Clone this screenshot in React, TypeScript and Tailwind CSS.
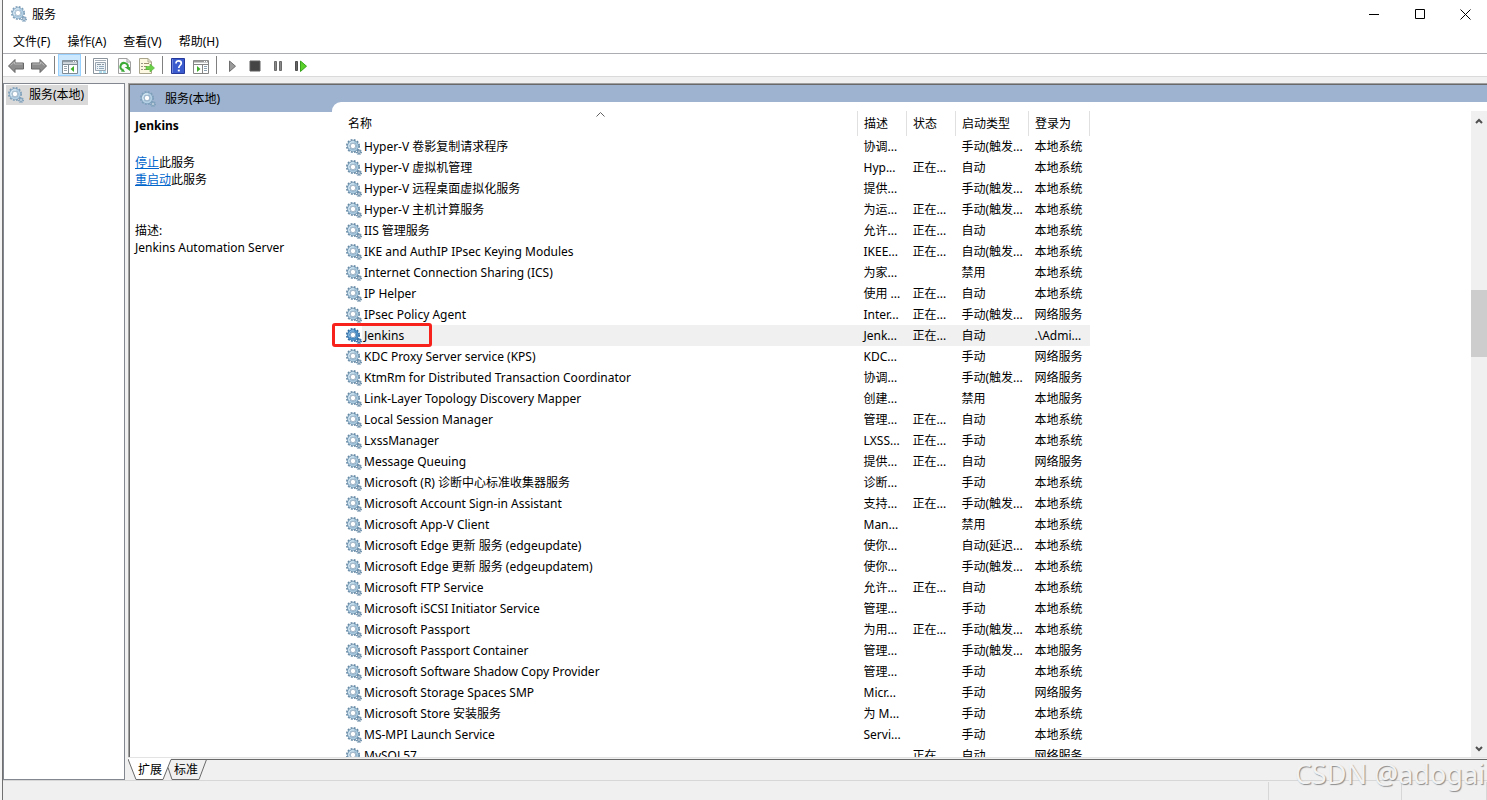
import { useState } from "react";
import type { ReactNode } from "react";

type Service = {
  name: string;
  desc: string;
  status: string;
  startup: string;
  logon: string;
};

const RUNNING = "正在...";
const MANUAL_TRIGGER = "手动(触发...";
const LOCAL_SYSTEM = "本地系统";
const LOCAL_SERVICE = "本地服务";
const NETWORK_SERVICE = "网络服务";

function row(
  name: string,
  desc: string,
  status: string,
  startup: string,
  logon: string,
): Service {
  return { name, desc, status, startup, logon };
}

const services: Service[] = [
  row("Hyper-V 卷影复制请求程序", "协调...", "", MANUAL_TRIGGER, LOCAL_SYSTEM),
  row("Hyper-V 虚拟机管理", "Hyp...", RUNNING, "自动", LOCAL_SYSTEM),
  row("Hyper-V 远程桌面虚拟化服务", "提供...", "", MANUAL_TRIGGER, LOCAL_SYSTEM),
  row("Hyper-V 主机计算服务", "为运...", RUNNING, MANUAL_TRIGGER, LOCAL_SYSTEM),
  row("IIS 管理服务", "允许...", RUNNING, "自动", LOCAL_SYSTEM),
  row("IKE and AuthIP IPsec Keying Modules", "IKEE...", RUNNING, "自动(触发...", LOCAL_SYSTEM),
  row("Internet Connection Sharing (ICS)", "为家...", "", "禁用", LOCAL_SYSTEM),
  row("IP Helper", "使用 ...", RUNNING, "自动", LOCAL_SYSTEM),
  row("IPsec Policy Agent", "Inter...", RUNNING, MANUAL_TRIGGER, NETWORK_SERVICE),
  row("Jenkins", "Jenk...", RUNNING, "自动", ".\\Admi..."),
  row("KDC Proxy Server service (KPS)", "KDC...", "", "手动", NETWORK_SERVICE),
  row("KtmRm for Distributed Transaction Coordinator", "协调...", "", MANUAL_TRIGGER, NETWORK_SERVICE),
  row("Link-Layer Topology Discovery Mapper", "创建...", "", "禁用", LOCAL_SERVICE),
  row("Local Session Manager", "管理...", RUNNING, "自动", LOCAL_SYSTEM),
  row("LxssManager", "LXSS...", RUNNING, "手动", LOCAL_SYSTEM),
  row("Message Queuing", "提供...", RUNNING, "自动", NETWORK_SERVICE),
  row("Microsoft (R) 诊断中心标准收集器服务", "诊断...", "", "手动", LOCAL_SYSTEM),
  row("Microsoft Account Sign-in Assistant", "支持...", RUNNING, MANUAL_TRIGGER, LOCAL_SYSTEM),
  row("Microsoft App-V Client", "Man...", "", "禁用", LOCAL_SYSTEM),
  row("Microsoft Edge 更新 服务 (edgeupdate)", "使你...", "", "自动(延迟...", LOCAL_SYSTEM),
  row("Microsoft Edge 更新 服务 (edgeupdatem)", "使你...", "", MANUAL_TRIGGER, LOCAL_SYSTEM),
  row("Microsoft FTP Service", "允许...", RUNNING, "自动", LOCAL_SYSTEM),
  row("Microsoft iSCSI Initiator Service", "管理...", "", "手动", LOCAL_SYSTEM),
  row("Microsoft Passport", "为用...", RUNNING, MANUAL_TRIGGER, LOCAL_SYSTEM),
  row("Microsoft Passport Container", "管理...", "", MANUAL_TRIGGER, LOCAL_SERVICE),
  row("Microsoft Software Shadow Copy Provider", "管理...", "", "手动", LOCAL_SYSTEM),
  row("Microsoft Storage Spaces SMP", "Micr...", "", "手动", NETWORK_SERVICE),
  row("Microsoft Store 安装服务", "为 M...", "", "手动", LOCAL_SYSTEM),
  row("MS-MPI Launch Service", "Servi...", "", "手动", LOCAL_SYSTEM),
  row("MySQL57", "", RUNNING, "自动", NETWORK_SERVICE),
];

export default function App() {
  const [selected, setSelected] = useState("Jenkins");

  return (
    <div className="flex h-screen w-full overflow-hidden bg-[#f0f0f0] font-['Noto_Sans','Noto_Sans_CJK_SC',sans-serif] text-xs text-black">
      <div className="w-[3px] shrink-0 border-r border-[#707070] bg-[#f4f4f4]" />
      <div className="flex min-w-0 flex-1 flex-col">
        <TitleBar />
        <MenuBar />
        <Toolbar />
        <main className="flex min-h-0 flex-1 gap-[3px] pt-[6px]">
          <aside className="w-[122px] shrink-0 border border-[#828790] bg-white">
            <button className="ml-[2px] mt-px flex h-5 items-center gap-[5px] bg-[#d9d9d9] px-[2px] pr-1">
              <GearIcon />
              服务(本地)
            </button>
          </aside>
          <div className="flex min-w-0 flex-1 flex-col">
            <div className="flex min-h-0 flex-1 border-l border-t border-[#a0a0a0]">
              <div className="flex min-w-0 flex-1 border-l border-t border-[#696969] bg-white">
                <InfoPanel name={selected} />
                <section className="flex min-w-0 flex-1 flex-col bg-[#9db3cf] pt-[17px]">
                  <div className="flex min-h-0 flex-1 rounded-tl-[9px] bg-white pt-[9px]">
                    <div className="min-w-0 flex-1 overflow-hidden">
                      <ServiceTable selected={selected} onSelect={setSelected} />
                    </div>
                    <ScrollBar />
                  </div>
                </section>
              </div>
            </div>
            <ViewTabs />
          </div>
        </main>
        <footer className="flex h-5 shrink-0 justify-end border-t border-[#d7d7d7] pt-px">
          <div className="w-[133px] border-l border-[#d7d7d7]" />
          <div className="w-[86px] border-x border-[#d7d7d7]" />
        </footer>
      </div>
      <span className="pointer-events-none absolute bottom-2 right-[2px] text-[27px] leading-9 text-[#f2f2f2] [text-shadow:1px_1px_1px_#8c8c8c]">
        CSDN @adogai
      </span>
    </div>
  );
}

function TitleBar() {
  return (
    <header className="flex h-7 shrink-0 items-center bg-white pl-2">
      <GearIcon />
      <h1 className="ml-[5px] flex-1 pt-[2px]">服务</h1>
      <button aria-label="最小化" className="flex h-full w-[46px] items-center justify-center">
        <svg width="10" height="10" stroke="#000">
          <path d="M0 5.5H10" />
        </svg>
      </button>
      <button aria-label="最大化" className="flex h-full w-[46px] items-center justify-center">
        <svg width="10" height="10" fill="none" stroke="#000">
          <path d="M.5 .5H9.5V9.5H.5Z" />
        </svg>
      </button>
      <button aria-label="关闭" className="flex h-full w-[44px] items-center justify-center">
        <svg width="11" height="11" stroke="#000">
          <path d="M.5 .5L10.5 10.5M10.5 .5L.5 10.5" />
        </svg>
      </button>
    </header>
  );
}

function MenuBar() {
  return (
    <nav className="flex h-[26px] shrink-0 items-center gap-[17px] border-b border-[#abadb3] bg-white pl-[10px] pt-[2px]">
      {["文件(F)", "操作(A)", "查看(V)", "帮助(H)"].map((item) => (
        <button key={item}>{item}</button>
      ))}
    </nav>
  );
}

function ToolButton({
  label,
  active,
  children,
}: {
  label: string;
  active?: boolean;
  children: ReactNode;
}) {
  return (
    <button
      aria-label={label}
      className={`${active ? "border border-[#99d1ff] bg-[#cce8ff]" : ""} flex h-[22px] w-[23px] items-center justify-center`}
    >
      <svg width="16" height="16" viewBox="0 0 16 16" fill="none" className="mt-px">
        {children}
      </svg>
    </button>
  );
}

function Divider() {
  return <div className="ml-1 mr-[3px] h-[18px] w-px bg-[#808080]" />;
}

function Toolbar() {
  return (
    <div className="flex h-[23px] shrink-0 items-center border-b border-[#dadada] bg-white pl-px">
      <ToolButton label="后退">
        <path
          d="M.5 8L7 1.5V5H15.5V11H7V14.5Z"
          fill="#8d8d8d"
          stroke="#666"
          strokeLinejoin="round"
        />
        <path d="M2.5 7.5L6.5 4V6H14.5" stroke="#b9b9b9" />
      </ToolButton>
      <ToolButton label="前进">
        <path
          d="M15.5 8L9 1.5V5H.5V11H9V14.5Z"
          fill="#8d8d8d"
          stroke="#666"
          strokeLinejoin="round"
        />
        <path d="M1.5 6H9.5V4L13.5 7.5" stroke="#b9b9b9" />
      </ToolButton>
      <Divider />
      <ToolButton label="显示/隐藏控制台树" active>
        <path d="M.5 2.5H15.5V15.5H.5Z" fill="#fff" stroke="#7f8b95" />
        <path d="M1 3.5H15" stroke="#8f9ba5" strokeWidth="2" />
        <path d="M11 3.5H14" stroke="#fff" strokeDasharray="1 1" />
        <path d="M1 5.5H15" stroke="#d3dae0" />
        <path d="M1 6.5H15M6.5 7V15" stroke="#7f8b95" />
        <path d="M2 8.5H5M2 10.5H5M2 12.5H5" stroke="#9aa5ae" />
        <path d="M12 8V14L8.5 11Z" fill="#3faf2c" />
      </ToolButton>
      <Divider />
      <ToolButton label="属性">
        <path d="M.5 .5H14.5V15.5H.5Z" fill="#fff" stroke="#8b949c" />
        <path d="M2 2.5H13" stroke="#a5b0b9" />
        <path d="M2.5 4.5H12.5V12.5H2.5Z" fill="#eef3f7" stroke="#9aa7b2" />
        <path d="M4 6.5H8M9 6.5H11" stroke="#8997a3" />
        <path d="M4 8.5H5M6 8.5H11M4 10.5H5M6 10.5H11" stroke="#8fa8bc" />
        <path d="M6 14H9M10 14H13" stroke="#63bfe0" />
      </ToolButton>
      <ToolButton label="刷新">
        <path d="M2.5 .5H11L14.5 4V15.5H2.5Z" fill="#fbfbfb" stroke="#a0a0a0" />
        <path d="M11 .5V4H14.5" stroke="#a0a0a0" />
        <path d="M6.6 12A3.7 3.7 0 1 1 11.8 9.4" stroke="#3aa935" strokeWidth="2" />
        <path d="M8.5 9H14V13Z" fill="#3aa935" />
        <path d="M5 13.5L9 14L7 10.5Z" fill="#3aa935" />
      </ToolButton>
      <ToolButton label="导出列表">
        <path d="M.5 .5H9L12.5 4V15.5H.5Z" fill="#fdf8e1" stroke="#a9a48c" />
        <path d="M9 .5V4H12.5" stroke="#a9a48c" />
        <path d="M2.5 5.5H3.5M2.5 8.5H3.5M2.5 11.5H3.5" stroke="#333" />
        <path d="M5 5.5H10M5 8.5H8M5 11.5H10" stroke="#9c8f70" />
        <path
          d="M7 8.5H11V6L15.5 10L11 14V11.5H7Z"
          fill="#6cd04b"
          stroke="#4bb32f"
          strokeWidth=".6"
        />
      </ToolButton>
      <Divider />
      <ToolButton label="帮助">
        <path d="M1.5 .5H14.5V15.5H1.5Z" fill="#3a5bcd" stroke="#26389a" />
        <path d="M2.5 1V15" stroke="#7289dc" />
        <path
          d="M6 5.6C6 3.6 7.2 2.8 8.6 2.8C10.2 2.8 11.3 3.8 11.3 5.2C11.3 7.2 8.8 7.4 8.8 10"
          stroke="#fff"
          strokeWidth="1.7"
        />
        <path d="M7.8 11.6H9.8V13.4H7.8Z" fill="#fff" />
      </ToolButton>
      <ToolButton label="显示/隐藏操作窗格">
        <path d="M.5 2.5H15.5V15.5H.5Z" fill="#fff" stroke="#858585" />
        <path d="M1 3.5H15" stroke="#999" strokeWidth="2" />
        <path d="M11 3.5H14" stroke="#fff" strokeDasharray="1 1" />
        <path d="M1 6.5H15M9.5 7V15" stroke="#858585" />
        <path d="M11 8.5H14M11 10.5H14M11 12.5H14" stroke="#8ba0b0" />
        <path d="M4 8V14L7.5 11Z" fill="#3faf2c" />
      </ToolButton>
      <Divider />
      <ToolButton label="启动服务">
        <path d="M5.5 3V13.5L11.5 8.2Z" fill="#9b9b9b" stroke="#6e6e6e" />
      </ToolButton>
      <ToolButton label="停止服务">
        <path d="M3 3H13V13H3Z" fill="#444" stroke="#5e5e5e" strokeLinejoin="round" />
      </ToolButton>
      <ToolButton label="暂停服务">
        <path d="M4.5 3.5H6.5V12.5H4.5ZM9.5 3.5H11.5V12.5H9.5Z" fill="#8a8a8a" stroke="#6a6a6a" />
      </ToolButton>
      <ToolButton label="重启动服务">
        <path d="M2.5 3.5H4.5V12.5H2.5Z" fill="#666" stroke="#4e4e4e" />
        <path d="M7.5 3V13.5L13.5 8.2Z" fill="#5bd22b" stroke="#37a51c" />
      </ToolButton>
    </div>
  );
}

const gearTones = {
  normal: { edge: "#7d9fba", body: "#b4d0e4", shine: "#e2f0f8" },
  row: { edge: "#668aa6", body: "#a9c9df", shine: "#e2f0f8" },
  selected: { edge: "#2a68a0", body: "#4f93cb", shine: "#9cc7ea" },
};

function GearIcon({ tone = "normal" }: { tone?: keyof typeof gearTones }) {
  const { edge, body, shine } = gearTones[tone];
  return (
    <svg width="16" height="16" viewBox="0 0 16 16" fill="none" className="shrink-0">
      {/* teeth */}
      <circle cx="7" cy="7" r="6.2" stroke={edge} strokeWidth="1.6" strokeDasharray="1.9 1.35" />
      <circle cx="7" cy="7" r="4.4" stroke={edge} strokeWidth="2.8" />
      <circle cx="7" cy="7" r="4.3" stroke={body} strokeWidth="1.9" />
      <path d="M3.6 9.2A4 4 0 0 1 8 3" stroke={shine} />
      <circle cx="7" cy="7" r="2.7" fill="#fff" stroke={edge} strokeWidth=".6" />
      <circle cx="13" cy="13" r="2.4" stroke={edge} strokeWidth="1.2" strokeDasharray="1.1 .8" />
      <circle cx="13" cy="13" r="1.4" fill="#fff" stroke={edge} strokeWidth="1.2" />
    </svg>
  );
}

function InfoPanel({ name }: { name: string }) {
  return (
    <section className="w-[202px] shrink-0 leading-[17px]">
      <h2 className="flex h-[27px] items-center gap-[9px] bg-[#9db3cf] pl-[10px]">
        <GearIcon />
        服务(本地)
      </h2>
      <div className="pl-[5px] pt-[5px]">
        <p className="font-bold">{name}</p>
        <p className="mt-5">
          <a href="#stop" className="text-[#0066cc] underline">
            停止
          </a>
          此服务
        </p>
        <p>
          <a href="#restart" className="text-[#0066cc] underline">
            重启动
          </a>
          此服务
        </p>
        <p className="mt-[34px]">描述:</p>
        <p>Jenkins Automation Server</p>
      </div>
    </section>
  );
}

function ServiceTable({
  selected,
  onSelect,
}: {
  selected: string;
  onSelect: (name: string) => void;
}) {
  return (
    <table className="w-[758px] table-fixed border-collapse text-left">
      <colgroup>
        <col />
        <col className="w-[49px]" />
        <col className="w-[49px]" />
        <col className="w-[73px]" />
        <col className="w-[61px]" />
      </colgroup>
      <thead>
        <tr className="h-[25px]">
          <th className="relative border-r border-[#e0e0e0] p-0 pl-4 font-normal">
            名称
            <svg
              width="9"
              height="5"
              fill="none"
              stroke="#606060"
              className="absolute left-[264px] top-px"
            >
              <path d="M.5 4.5L4.5 .5L8.5 4.5" />
            </svg>
          </th>
          {["描述", "状态", "启动类型", "登录为"].map((title) => (
            <th
              key={title}
              className="border-r border-[#e0e0e0] p-0 pl-[6px] font-normal"
            >
              {title}
            </th>
          ))}
        </tr>
      </thead>
      <tbody>
        {services.map((s) => {
          const active = s.name === selected;
          return (
            <tr key={s.name} onClick={() => onSelect(s.name)} className="h-[21px]">
              <td className="p-0 pl-[14px]">
                <div className="relative flex h-[21px] items-center">
                  <GearIcon tone={active ? "selected" : "row"} />
                  <span
                    className={`${active ? "bg-[#f0f0f0]" : ""} flex h-full flex-1 items-center pl-[2px]`}
                  >
                    {s.name}
                  </span>
                  {active && (
                    <div className="absolute -left-[14px] -top-[2px] h-6 w-[100px] rounded-[3px] border-3 border-[#f8221c]" />
                  )}
                </div>
              </td>
              {[s.desc, s.status, s.startup, s.logon].map((text, i) => (
                <td
                  key={i}
                  className={`${active ? "bg-[#f0f0f0]" : ""} whitespace-nowrap p-0 pl-[6px]`}
                >
                  {text}
                </td>
              ))}
            </tr>
          );
        })}
      </tbody>
    </table>
  );
}

function ScrollBar() {
  return (
    <div className="flex w-4 shrink-0 flex-col bg-[#f0f0f0]">
      <button aria-label="向上滚动" className="flex h-5 items-center justify-center">
        <svg width="8" height="6" fill="none" stroke="#505050" strokeWidth="2">
          <path d="M1 5L4 2L7 5" />
        </svg>
      </button>
      <div className="flex flex-1 flex-col">
        <div className="h-[26%]" />
        <div className="h-[11%] bg-[#cdcdcd]" />
      </div>
      <button aria-label="向下滚动" className="flex h-4 items-center justify-center">
        <svg width="8" height="6" fill="none" stroke="#505050" strokeWidth="2">
          <path d="M1 1L4 4L7 1" />
        </svg>
      </button>
    </div>
  );
}

function ViewTabs() {
  return (
    <div className="flex h-[23px] shrink-0 border-t border-[#e3e3e3]">
      <div className="relative flex w-20 items-center gap-3 pl-[10px] pt-px">
        <svg width="80" height="22" fill="none" className="absolute left-0 top-0">
          <path d="M0 0L8 21H35L43 1V0Z" fill="#fff" />
          <path d="M0 1L8 21.5H35L43 1.5H80M71 21.5L78.500 1.5M40 9.500L44 21.5H71" stroke="#696969" />
        </svg>
        <button className="relative">扩展</button>
        <button className="relative">标准</button>
      </div>
      <div className="mt-px flex-1 border-t border-[#696969]" />
    </div>
  );
}
